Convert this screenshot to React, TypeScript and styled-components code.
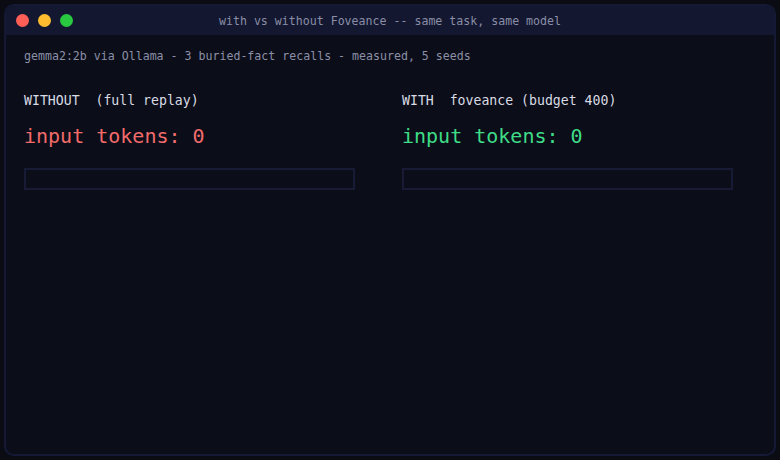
import React from "react";
import styled, { createGlobalStyle } from "styled-components";

const GlobalStyle = createGlobalStyle`
  html, body {
    margin: 0;
    padding: 0;
    background: #0a0b13;
  }
  body {
    font-family: "DejaVu Sans Mono", "Liberation Mono", monospace;
  }
`;

const Page = styled.div`
  width: 780px;
  height: 460px;
  box-sizing: border-box;
  padding: 4px;
`;

const Window = styled.div`
  height: 100%;
  box-sizing: border-box;
  border: 2px solid #151935;
  border-radius: 10px;
  background: #0b0d19;
  overflow: hidden;
  display: flex;
  flex-direction: column;
`;

const TitleBar = styled.div`
  height: 29px;
  background: #131730;
  display: flex;
  align-items: center;
  position: relative;
  padding: 0 10px;
  flex-shrink: 0;
`;

const Dots = styled.div`
  display: flex;
  gap: 9px;
`;

const Dot = styled.span<{ color: string }>`
  width: 13px;
  height: 13px;
  border-radius: 50%;
  background: ${(p) => p.color};
`;

// centred over the bar, independent of the dots
const Title = styled.div`
  position: absolute;
  left: 0;
  right: 0;
  text-align: center;
  font-size: 11.6px;
  color: #8a8ea6;
  pointer-events: none;
`;

const Body = styled.div`
  padding: 13px 18px 0 18px;
`;

const Subtitle = styled.div`
  font-size: 11.6px;
  color: #8b90a6;
  line-height: 16px;
`;

const Columns = styled.div`
  display: grid;
  grid-template-columns: 354px 354px;
  column-gap: 24px;
  margin-top: 28px;
`;

const Column = styled.div`
  display: flex;
  flex-direction: column;
`;

const Heading = styled.div`
  font-size: 13.2px;
  line-height: 18px;
  color: #d9dbe4;
  white-space: pre;
`;

const Tokens = styled.div<{ tone: "bad" | "good" }>`
  font-size: 20px;
  line-height: 24px;
  margin-top: 14px;
  color: ${(p) => (p.tone === "bad" ? "#f26b6b" : "#3fdc87")};
`;

const Bar = styled.div`
  width: 331px;
  height: 22px;
  box-sizing: border-box;
  border: 2px solid #171b36;
  margin-top: 20px;
`;

export default function App() {
  return (
    <>
      <GlobalStyle />
      <Page>
        <Window>
          <TitleBar>
            <Dots>
              <Dot color="#ff5f57" />
              <Dot color="#febc2e" />
              <Dot color="#28c840" />
            </Dots>
            <Title>with vs without Foveance -- same task, same model</Title>
          </TitleBar>
          <Body>
            <Subtitle>gemma2:2b via Ollama - 3 buried-fact recalls - measured, 5 seeds</Subtitle>
            <Columns>
              <Column>
                <Heading>WITHOUT  (full replay)</Heading>
                <Tokens tone="bad">input tokens: 0</Tokens>
                <Bar />
              </Column>
              <Column>
                <Heading>WITH  foveance (budget 400)</Heading>
                <Tokens tone="good">input tokens: 0</Tokens>
                <Bar />
              </Column>
            </Columns>
          </Body>
        </Window>
      </Page>
    </>
  );
}
